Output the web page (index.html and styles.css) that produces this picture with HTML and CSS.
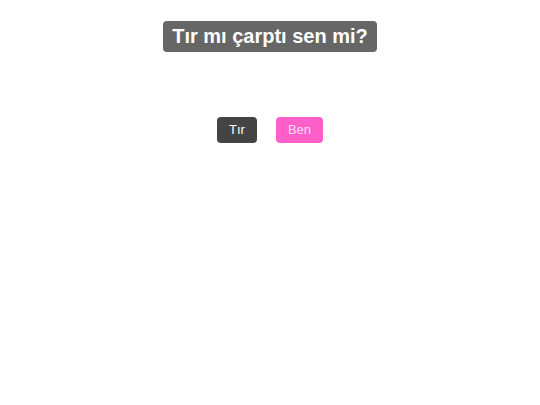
FILE: index.html
```html
<!DOCTYPE html>
<html lang="tr">
<head>
<meta charset="utf-8">
<link rel="stylesheet" href="styles.css">
</head>
<body>
<div class="page">
  <h1 class="title">Tır mı çarptı sen mi?</h1>
  <div class="buttons">
    <button class="btn btn-dark">Tır</button>
    <button class="btn btn-pink">Ben</button>
  </div>
</div>
</body>
</html>
```
FILE: styles.css
```css
html, body {
  margin: 0;
  padding: 0;
  background: #fff;
  font-family: "Liberation Sans", Arial, sans-serif;
}
.page {
  display: flex;
  flex-direction: column;
  align-items: center;
  padding-top: 21px;
}
.title {
  margin: 0;
  background: #666666;
  color: #fff;
  font-size: 20px;
  font-weight: bold;
  line-height: 31px;
  height: 31px;
  padding: 0 9.5px;
  border-radius: 4px;
}
.buttons {
  display: flex;
  gap: 19px;
  margin-top: 65px;
}
.btn {
  border: none;
  border-radius: 4px;
  color: #fff;
  font-family: "Liberation Sans", Arial, sans-serif;
  font-size: 13px;
  height: 26px;
  padding: 0 12px;
  line-height: 26px;
}
.btn-dark {
  background: #444444;
}
.btn-pink {
  background: #ff5fc9;
  color: #fde;
}
```
